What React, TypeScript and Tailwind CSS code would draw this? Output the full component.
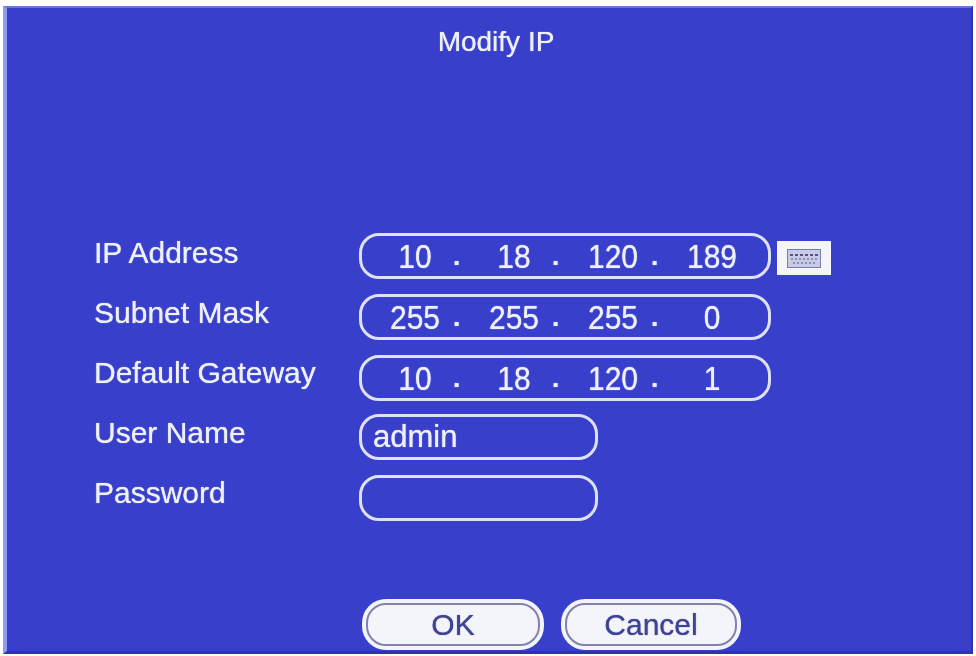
import React from 'react';

const FIELD_LABELS = ['IP Address', 'Subnet Mask', 'Default Gateway', 'User Name', 'Password'];

const IpField: React.FC<{ octets: string[] }> = ({ octets }) => (
  <div className="flex h-[46px] w-[412px] items-center rounded-[20px] border-[3px] border-[#dde1f8] pl-[15px]">
    {octets.map((octet, i) => (
      <div key={i} className="flex w-[99px] shrink-0 items-center">
        <span className="w-[76px] scale-y-[1.08] text-center">{octet}</span>
        {i < 3 && <span className="text-[26px] leading-none font-bold">.</span>}
      </div>
    ))}
  </div>
);

const TextField: React.FC<{ value?: string }> = ({ value }) => (
  <div className="flex h-[46px] w-[239px] items-center rounded-[20px] border-[3px] border-[#dde1f8] pl-[11px] text-[31px]">
    {value}
  </div>
);

const DialogButton: React.FC<{ label: string; width: string }> = ({ label, width }) => (
  <div className={`h-[51px] rounded-[24px] bg-[#f4f4fb] p-[4px] ${width}`}>
    <div className="flex h-full items-center justify-center rounded-[20px] border-2 border-[#7f83ad] text-[#3e4394]">
      {label}
    </div>
  </div>
);

const KeyboardButton: React.FC = () => (
  <div className="mt-[4px] flex h-[34px] w-[54px] items-center justify-center bg-[#f4f4fb]">
    <svg width="34" height="19" viewBox="0 0 34 19">
      <rect x="0.5" y="0.5" width="33" height="18" fill="#c9cbe6" stroke="#7a7cb0" />
      <path d="M3 6h28" stroke="#50538f" strokeWidth="2" strokeDasharray="3 2" />
      <path d="M4 10h26M6 14h22" stroke="#8b8dbb" strokeWidth="2" strokeDasharray="2 2" />
    </svg>
  </div>
);

export default function App() {
  return (
    <div className="h-[656px] w-[976px] overflow-hidden bg-white pt-[6px] pr-[3px] pb-[2px] pl-[3px] font-['Liberation_Sans',Arial,sans-serif] text-[30px] text-[#eef0fc] [text-shadow:0_0_1px_currentColor]">
      <div className="flex h-full flex-col border-t-2 border-r-2 border-b-[3px] border-l-4 border-t-[#6f74d8] border-r-[#3033a8] border-b-[#3033a8] border-l-[#8f9bec] bg-[#383fca] blur-[0.6px]">
        {/* Title */}
        <div className="pt-[12px] pl-[14px] text-center text-[28px] leading-[44px]">Modify IP</div>

        {/* Form */}
        <div className="mt-[169px] flex">
          <div className="ml-[87px] flex w-[265px] flex-col gap-[14px]">
            {FIELD_LABELS.map((label) => (
              <div key={label} className="flex h-[46px] items-center pb-[7px] whitespace-nowrap">
                {label}
              </div>
            ))}
          </div>

          <div className="flex flex-col gap-[13px]">
            <div className="flex flex-col gap-[15px]">
              <div className="flex items-center gap-[6px]">
                <IpField octets={['10', '18', '120', '189']} />
                <KeyboardButton />
              </div>
              <IpField octets={['255', '255', '255', '0']} />
              <IpField octets={['10', '18', '120', '1']} />
            </div>
            <div className="flex flex-col gap-[15px]">
              <TextField value="admin" />
              <TextField />
            </div>
          </div>
        </div>

        {/* Actions */}
        <div className="mt-[78px] ml-[355px] flex gap-[17px]">
          <DialogButton label="OK" width="w-[182px]" />
          <DialogButton label="Cancel" width="w-[180px]" />
        </div>
      </div>
    </div>
  );
}
